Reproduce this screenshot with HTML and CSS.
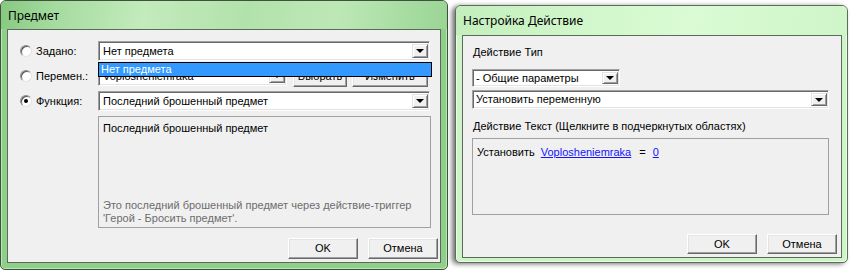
FILE: index.html
```html
<!DOCTYPE html>
<html lang="ru">
<head>
<meta charset="utf-8">
<title>Предмет / Настройка Действие</title>
<link rel="stylesheet" href="styles.css">
</head>
<body>
<div class="desktop">
  <div class="window win-item">
    <div class="titlebar">Предмет</div>
    <div class="client">
      <div class="row">
        <div class="opt"><span class="radio"></span><span>Задано:</span></div>
        <div class="combo wide"><span class="combo-text">Нет предмета</span><span class="arrow"></span></div>
      </div>
      <div class="row">
        <div class="opt"><span class="radio"></span><span>Перемен.:</span></div>
        <div class="combo narrow"><span class="combo-text">Voplosheniemraka</span><span class="arrow"></span></div>
        <button class="btn pick">Выбрать</button>
        <button class="btn edit">Изменить</button>
      </div>
      <div class="row">
        <div class="opt"><span class="radio checked"></span><span>Функция:</span></div>
        <div class="combo wide"><span class="combo-text">Последний брошенный предмет</span><span class="arrow"></span></div>
      </div>
      <div class="desc">
        <div class="desc-title">Последний брошенный предмет</div>
        <div class="desc-note">Это последний брошенный предмет через действие-триггер<br>'Герой - Бросить предмет'.</div>
      </div>
      <div class="actions">
        <button class="btn dlg">OK</button>
        <button class="btn dlg">Отмена</button>
      </div>
      <div class="droplist"><div class="drop-item">Нет предмета</div></div>
    </div>
  </div>

  <div class="window win-action">
    <div class="titlebar">Настройка Действие</div>
    <div class="client">
      <div class="lbl">Действие Тип</div>
      <div class="combo type"><span class="combo-text">- Общие параметры</span><span class="arrow"></span></div>
      <div class="combo action"><span class="combo-text">Установить переменную</span><span class="arrow"></span></div>
      <div class="lbl lbl2">Действие Текст (Щелкните в подчеркнутых областях)</div>
      <div class="textbox">
        <span>Установить</span><a class="link var">Voplosheniemraka</a><span class="eq">=</span><a class="link val">0</a>
      </div>
      <div class="actions">
        <button class="btn dlg2">OK</button>
        <button class="btn dlg2">Отмена</button>
      </div>
    </div>
  </div>
</div>
</body>
</html>
```

FILE: styles.css
```css
* { box-sizing: border-box; }

html, body {
  margin: 0;
  padding: 0;
  background: #ffffff;
}

body {
  width: 863px;
  height: 273px;
  overflow: hidden;
  font-family: "Liberation Sans", Arial, sans-serif;
  font-size: 11px;
  color: #000;
}

.desktop {
  display: flex;
  align-items: flex-start;
}

.window {
  border: 1px solid #3f523f;
  border-radius: 6px 6px 5px 5px;
  padding: 0 5px 6px 6px;
  flex: none;
}

.win-item {
  width: 448px;
  height: 270px;
  background: #8fcf89;
  box-shadow: inset 1px 1px 0 #b9e8b3, inset -1px -1px 0 #b9e8b3;
}

.win-action {
  width: 393px;
  height: 258px;
  margin-left: 7px;
  margin-top: 5px;
  padding: 0 5px 4px 6px;
  background: #cdf4c7;
  border-color: #5d6d5d;
  box-shadow: -3px 1px 5px rgba(0, 0, 0, 0.55), inset 1px 1px 0 #e9fde5, inset -1px -1px 0 #e9fde5;
}

.titlebar {
  height: 28px;
  margin: 0 -5px 0 -6px;
  padding-left: 7px;
  display: flex;
  align-items: center;
  font-family: "Noto Sans", "Open Sans", sans-serif;
  font-size: 12px;
  color: #000;
  border-radius: 5px 5px 0 0;
}

.win-item .titlebar {
  background: linear-gradient(100deg, #86c980 0%, #a4db9e 12%, #c3ebbc 32%, #b2e2ab 55%, #bde8b6 75%, #9ad594 100%);
}

.win-action .titlebar {
  height: 29px;
  padding-left: 7px;
  background: linear-gradient(100deg, #c3efbc 0%, #d2f7cc 35%, #dafbd4 60%, #cff5c9 100%);
}

.client {
  position: relative;
  background: #f0f0f0;
  border: 1px solid #5b6a5b;
}

.win-item .client {
  width: 434px;
  height: 234px;
  padding-top: 11px;
}

.win-action .client {
  width: 380px;
  height: 223px;
  padding: 10px 4px 0 9px;
}

/* rows */
.row {
  display: flex;
  align-items: center;
  height: 20px;
  margin-bottom: 5px;
}

.opt {
  width: 90px;
  flex: none;
  display: flex;
  align-items: center;
  padding-left: 12px;
}

.radio {
  position: relative;
  width: 12px;
  height: 12px;
  margin-right: 4px;
  border-radius: 50%;
  background: #fff;
  border: 1px solid;
  border-color: #8a8a8a #e2e2e2 #e2e2e2 #8a8a8a;
  box-shadow: inset 1px 1px 0 #555;
  flex: none;
}

.radio.checked::after {
  content: "";
  position: absolute;
  left: 3px;
  top: 3px;
  width: 4px;
  height: 4px;
  border-radius: 50%;
  background: #000;
}

/* combo boxes */
.combo {
  position: relative;
  display: flex;
  align-items: center;
  background: #fff;
  border: 1px solid;
  border-color: #a0a0a0 #ffffff #ffffff #a0a0a0;
  box-shadow: inset 1px 1px 0 #696969, inset -1px -1px 0 #e3e3e3;
  padding-left: 4px;
  flex: none;
}

.combo.wide { width: 332px; height: 20px; }
.combo.narrow { width: 189px; height: 20px; }

.combo-text {
  flex: 1;
  white-space: nowrap;
  overflow: hidden;
  line-height: 13px;
}

.arrow {
  position: relative;
  width: 16px;
  align-self: stretch;
  margin: 2px 1px 2px 0;
  background: #f0f0f0;
  border: 1px solid;
  border-color: #e3e3e3 #696969 #696969 #e3e3e3;
  box-shadow: inset 1px 1px 0 #fff, inset -1px -1px 0 #a0a0a0;
  flex: none;
}

.arrow::after {
  content: "";
  position: absolute;
  left: 50%;
  top: 50%;
  margin-left: -4px;
  margin-top: -2px;
  border-left: 4px solid transparent;
  border-right: 4px solid transparent;
  border-top: 4px solid #000;
}

/* buttons */
.btn {
  font-family: "Liberation Sans", Arial, sans-serif;
  font-size: 11px;
  color: #000;
  background: #f0f0f0;
  border: 1px solid;
  border-color: #ffffff #696969 #696969 #ffffff;
  box-shadow: inset -1px -1px 0 #a0a0a0, inset 1px 1px 0 #e3e3e3;
  padding: 0;
  margin: 0;
  height: 21px;
  line-height: 13px;
  flex: none;
}

.btn.pick { width: 54px; margin-left: 6px; }
.btn.edit { width: 76px; margin-left: 5px; }
.btn.dlg { width: 70px; }
.btn.dlg2 { width: 70px; height: 20px; }

/* description */
.desc {
  margin-left: 90px;
  width: 333px;
  height: 112px;
  border: 1px solid #a0a0a0;
  padding: 5px 4px 2px 4px;
  display: flex;
  flex-direction: column;
  justify-content: space-between;
  line-height: 13px;
}

.desc-note {
  color: #6d6d6d;
}

.actions {
  display: flex;
  justify-content: flex-end;
  gap: 10px;
}

.win-item .actions {
  margin-top: 10px;
  padding-right: 2px;
}

.win-action .actions {
  margin-top: 19px;
}

/* dropdown list overlay */
.droplist {
  position: absolute;
  left: 90px;
  top: 32px;
  width: 334px;
  height: 15px;
  border: 1px solid #000;
  background: #3399ff;
}

.drop-item {
  color: #fff;
  line-height: 13px;
  padding-left: 2px;
}

/* right dialog */
.lbl {
  line-height: 13px;
  padding-left: 1px;
}

.lbl2 {
  margin-top: 11px;
}

.combo.type {
  width: 148px;
  height: 18px;
  margin-top: 10px;
  padding-left: 3px;
}

.combo.action {
  width: 357px;
  height: 19px;
  margin-top: 3px;
  padding-left: 3px;
}

.textbox {
  margin-top: 5px;
  width: 357px;
  height: 77px;
  border: 1px solid #a0a0a0;
  padding: 7px 4px;
  line-height: 13px;
}

.link {
  color: #1414ff;
  text-decoration: underline;
  cursor: pointer;
}

.link.var { margin-left: 6px; }
.eq { margin-left: 8px; }
.link.val { margin-left: 7px; }
```
